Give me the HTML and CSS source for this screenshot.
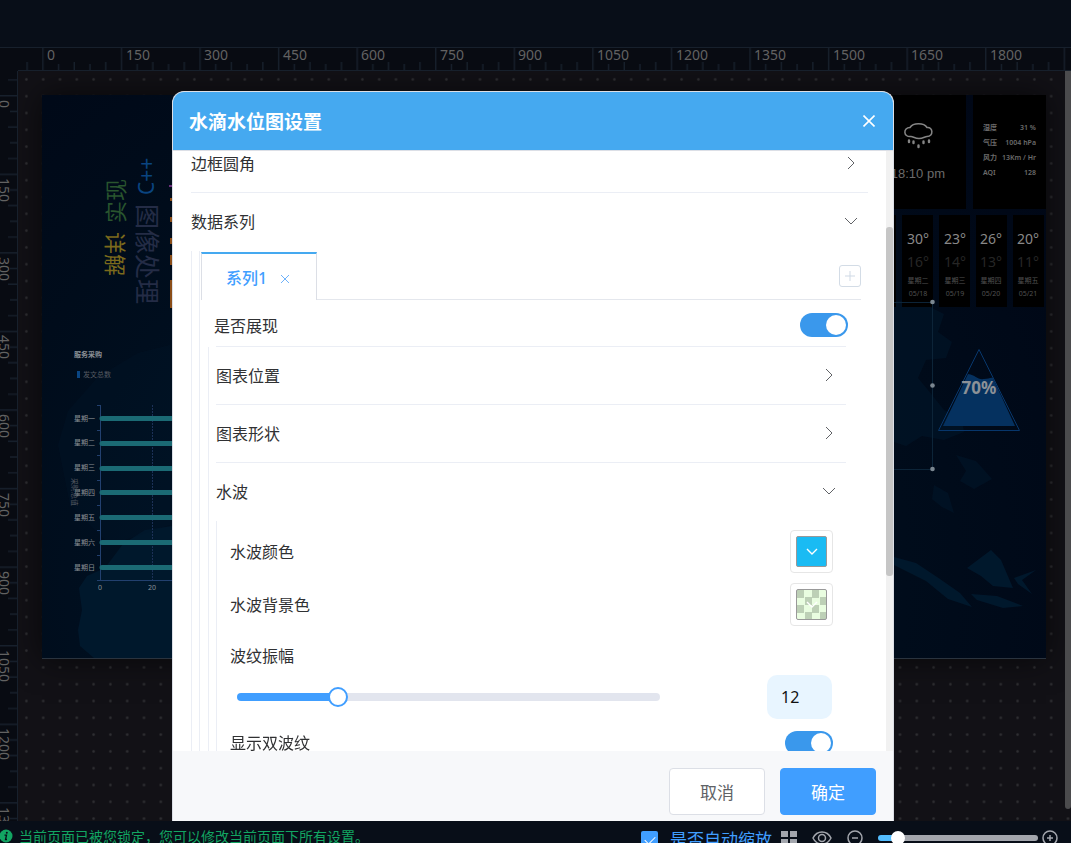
FILE: index.html
```html
<!DOCTYPE html>
<html lang="zh-CN">
<head>
  <meta charset="UTF-8">
  <title>水滴水位图设置</title>
  <link rel="stylesheet" href="styles.css">
</head>
<body>
  <div class="app">
    <header class="topbar"></header>
    <div class="ruler-corner"></div>
    <svg class="ruler ruler-x">
      <defs>
        <pattern id="ticks-x" x="24.2" y="0" width="78.57" height="24" patternUnits="userSpaceOnUse">
          <path d="M.7 0v24M16.4 16v8M32.1 14v10M47.8 16v8M63.5 14v10" stroke="#17202c" stroke-width="1.4"/>
        </pattern>
      </defs>
      <rect width="100%" height="100%" fill="url(#ticks-x)"/>
      <g>
        <text x="29" y="12">0</text>
        <text x="108" y="12">150</text>
        <text x="186" y="12">300</text>
        <text x="265" y="12">450</text>
        <text x="343" y="12">600</text>
        <text x="422" y="12">750</text>
        <text x="500" y="12">900</text>
        <text x="579" y="12">1050</text>
        <text x="658" y="12">1200</text>
        <text x="736" y="12">1350</text>
        <text x="815" y="12">1500</text>
        <text x="893" y="12">1650</text>
        <text x="972" y="12">1800</text>
      </g>
    </svg>
    <svg class="ruler ruler-y">
      <defs>
        <pattern id="ticks-y" x="0" y="24" width="18" height="78.57" patternUnits="userSpaceOnUse">
          <path d="M0 .7h18M10 16.4h8M8 32.1h10M10 47.8h8M8 63.5h10" stroke="#17202c" stroke-width="1.4"/>
        </pattern>
      </defs>
      <rect width="100%" height="100%" fill="url(#ticks-y)"/>
      <g>
        <text transform="translate(-1 29) rotate(90)">0</text>
        <text transform="translate(-1 107) rotate(90)">150</text>
        <text transform="translate(-1 186) rotate(90)">300</text>
        <text transform="translate(-1 264) rotate(90)">450</text>
        <text transform="translate(-1 343) rotate(90)">600</text>
        <text transform="translate(-1 422) rotate(90)">750</text>
        <text transform="translate(-1 500) rotate(90)">900</text>
        <text transform="translate(-1 579) rotate(90)">1050</text>
        <text transform="translate(-1 657) rotate(90)">1200</text>
        <text transform="translate(-1 736) rotate(90)">1350</text>
      </g>
    </svg>

    <main class="workspace">
      <svg class="dots">
        <defs>
          <pattern id="dots" x="0" y="0" width="16.8" height="16.8" patternUnits="userSpaceOnUse">
            <rect x="7.2" y="7.2" width="2.4" height="2.4" rx=".8" fill="#303033"/>
          </pattern>
        </defs>
        <rect width="100%" height="100%" fill="url(#dots)"/>
      </svg>
      <div class="board">
        <svg viewBox="0 0 1004 563">
          <!-- map backdrop -->
          <g fill="#00182c">
            <path d="M52 563l-14-12-2-16 4-20-3-22 8-12 18-8 18-24 22-14 27-4v132z"/>
            <path opacity=".3" d="M16 350l10-34 30-34 40-24 32-8v180l-60 20-40-40z"/>
            <path opacity=".5" d="M852 205l26 2 24 12-6 18 14 10-6 16-20 2-8 18 10 12 16 20 18 10 2 12-20 8-22-4-16 10-12-4z"/>
            <path opacity=".5" d="M914 360l20 6 16 18-18 10-14-8 6-10zM892 390l14 8 6 20-12-6-10-8z"/>
            <path d="M852 462l22 6 24 16 20 14 12 14-24-8-22-18-32-16zM925 473l24-18 10 10 12 28-20-2-12-10zM929 499l26 2 26 10-20 2-26-8zM972 483l22-8-14 10 10 14-14-10z"/>
          </g>
          <!-- word cloud -->
          <g>
            <text fill="#29552e" font-size="22" transform="translate(82 128) rotate(-90)">实现</text>
            <text fill="#7c6a1c" font-size="22" transform="translate(65 137) rotate(90)">详解</text>
            <text fill="#0a4480" font-size="21" transform="translate(112 100) rotate(-90)">C++</text>
            <text fill="#242c46" font-size="25" transform="translate(96 109) rotate(90)">图像处理</text>
            <path d="M128.500 90v2" stroke="#6a2f7a" stroke-width="3"/>
            <path d="M129 103v3M129 122v5M129 143v6M129 160v10M129 185v28" stroke="#8a4d18" stroke-width="2"/>
          </g>
          <!-- bar chart -->
          <g>
            <text class="label bold" x="32" y="262">服务采购</text>
            <rect x="35" y="276" width="3" height="7" fill="#0a4684"/>
            <text class="label dim" x="41" y="282">发文总数</text>
            <path d="M110.500 310v175" stroke="#1c3157" stroke-dasharray="2 1"/>
            <path d="M58.500 310v176M55 310.500h3M55 335.500h3M55 360.500h3M55 385.500h3M55 410.500h3M55 435.500h3M55 460.500h3M55 485.500h80" stroke="#22406f" fill="none"/>
            <path d="M60 323.500h77M60 348.500h77M60 373.500h77M60 397.500h77M60 422.500h77M60 447.500h77M60 472.500h77" stroke="#1b6a74" stroke-width="5" stroke-linecap="round"/>
            <text class="label" x="32" y="326">星期一</text>
            <text class="label" x="32" y="350">星期二</text>
            <text class="label" x="32" y="375">星期三</text>
            <text class="label" x="32" y="400">星期四</text>
            <text class="label" x="32" y="425">星期五</text>
            <text class="label" x="32" y="450">星期六</text>
            <text class="label" x="32" y="475">星期日</text>
            <text class="label" x="56" y="495">0</text>
            <text class="label" x="106" y="495">20</text>
            <text class="label dim" transform="translate(30 383) rotate(90)">采购总值</text>
          </g>
          <!-- weather -->
          <g>
            <path d="M800 0h124v114H800zM931 0h73v114h-73zM840 120h14v92h-14zM860 120h31v92h-31zM897 120h31v92h-31zM934 120h31v92h-31zM971 120h31v92h-31z" fill="#000"/>
            <path d="M868 32.500c3-5 14-5 17 0 6-1 7 9 0 9-2 0-4 2-8 2s-6-2-8-2c-8 1-8-9-1-9z" stroke="#858585" stroke-width="1.500" fill="none"/>
            <path d="M867 45.500v1.500M871.500 46.500v1.500M876.500 50.500v1.500M881.500 46.500v1.500M887 45.500v1.500" stroke="#858585" stroke-width="2.400" stroke-linecap="round"/>
            <text x="903" y="83" font-family="Liberation Sans, sans-serif" font-size="13" text-anchor="end" fill="#6b6b6b">18:10 pm</text>
            <g class="info">
              <text x="941" y="35">湿度</text><text x="994" y="35" text-anchor="end">31 %</text>
              <text x="941" y="50">气压</text><text x="994" y="50" text-anchor="end">1004 hPa</text>
              <text x="941" y="65">风力</text><text x="994" y="65" text-anchor="end">13Km / Hr</text>
              <text x="941" y="80">AQI</text><text x="994" y="80" text-anchor="end">128</text>
            </g>
            <g class="temp">
              <text x="876" y="149">30°</text><text x="913" y="149">23°</text><text x="949" y="149">26°</text><text x="986" y="149">20°</text>
            </g>
            <g class="temp low">
              <text x="876" y="172">16°</text><text x="913" y="172">14°</text><text x="949" y="172">13°</text><text x="986" y="172">11°</text>
            </g>
            <g class="day">
              <text x="876" y="188">星期二</text><text x="913" y="188">星期三</text><text x="949" y="188">星期四</text><text x="986" y="188">星期五</text>
              <text x="876" y="201">05/18</text><text x="913" y="201">05/19</text><text x="949" y="201">05/20</text><text x="986" y="201">05/21</text>
            </g>
          </g>
          <!-- selected widget frame -->
          <path d="M840 207.500h50.500v167H840" stroke="#0c2438" fill="none"/>
          <g fill="#7b8791">
            <circle cx="890.500" cy="207" r="2.300"/>
            <circle cx="890.500" cy="290.500" r="2.300"/>
            <circle cx="890.500" cy="374" r="2.300"/>
          </g>
          <!-- water level -->
          <path d="M937 254.500l40.500 81h-81z" stroke="#07366b" fill="none"/>
          <path d="M926 279c8 1 9 6 16 5 4 0 7-2 9-1l22 48H901z" fill="#05315f"/>
          <text x="937" y="299" text-anchor="middle" font-size="17" font-weight="700" fill="#8c9197">70%</text>
        </svg>
      </div>
      <div class="page-scroll"></div>
    </main>

    <footer class="statusbar">
      <div class="statusbar-inner">
        <p class="notice">
          <svg width="13" height="14" viewBox="1 0 13 14"><circle cx="7" cy="7" r="6.500" fill="#12a562"/><circle cx="7.800" cy="3.800" r="1" fill="#080e18"/><path d="M5.500 6.200h2l-1 4.300h1.500" stroke="#080e18" stroke-width="1.300" fill="none"/></svg>
          当前页面已被您锁定，您可以修改当前页面下所有设置。
        </p>
        <label class="auto-zoom"><input type="checkbox" class="check" checked>是否自动缩放</label>
        <div class="tools">
          <button class="icon-btn" aria-label="网格"><svg width="16" height="16" fill="#a3a6ad"><path d="M0 1h7v6H0zM9 1h7v6H9zM0 9h7v6H0zM9 9h7v6H9z"/></svg></button>
          <button class="icon-btn" aria-label="预览"><svg width="20" height="16" fill="none" stroke="#a3a6ad" stroke-width="1.500"><path d="M1 8c4-8 14-8 18 0-4 8-14 8-18 0z"/><circle cx="10" cy="8" r="3.500"/></svg></button>
          <button class="icon-btn" aria-label="缩小"><svg width="16" height="16" fill="none" stroke="#a3a6ad" stroke-width="1.500"><circle cx="8" cy="8" r="7"/><path d="M5 8h6"/></svg></button>
          <input type="range" class="zoom-range" min="0" max="100" value="9" aria-label="缩放">
          <button class="icon-btn" aria-label="放大"><svg width="16" height="16" fill="none" stroke="#a3a6ad" stroke-width="1.500"><circle cx="8" cy="8" r="7"/><path d="M5 8h6M8 5v6"/></svg></button>
        </div>
      </div>
    </footer>
  </div>

  <div class="overlay">
    <section class="dialog" role="dialog" aria-labelledby="dialog-title">
      <header class="dialog-header">
        <h2 id="dialog-title">水滴水位图设置</h2>
        <button class="close-btn" aria-label="关闭"><svg width="12" height="12" fill="none" stroke="#fff" stroke-width="1.600"><path d="M.5 .5l11 11M11.500 .5l-11 11"/></svg></button>
      </header>
      <div class="dialog-body">
        <div class="content">
          <button class="item">边框圆角<svg class="arrow" viewBox="0 0 14 14"><path d="M4 1l6 6-6 6"/></svg></button>
          <button class="item open">数据系列<svg class="arrow" viewBox="0 0 14 14"><path d="M1 4l6 6 6-6"/></svg></button>
          <div class="series">
            <div class="series-pane">
              <div class="tabs">
                <div class="tab">
                  <a href="#">系列1</a>
                  <button class="tab-close" aria-label="删除"><svg width="8" height="8" stroke="#6fb2fa"><path d="M0 0l8 8M8 0l-8 8"/></svg></button>
                </div>
                <div class="tabs-rest">
                  <button class="add-btn" aria-label="新增"><svg width="12" height="12" stroke="#cfd9e5"><path d="M6 1v10M1 6h10"/></svg></button>
                </div>
              </div>
              <div class="show-row">
                <label for="show">是否展现</label>
                <input type="checkbox" class="switch" id="show" checked>
              </div>
              <div class="groups">
                <button class="item">图表位置<svg class="arrow" viewBox="0 0 14 14"><path d="M4 1l6 6-6 6"/></svg></button>
                <button class="item">图表形状<svg class="arrow" viewBox="0 0 14 14"><path d="M4 1l6 6-6 6"/></svg></button>
                <button class="item open">水波<svg class="arrow" viewBox="0 0 14 14"><path d="M1 4l6 6 6-6"/></svg></button>
                <div class="wave">
                  <div class="field color-field">
                    <span>水波颜色</span>
                    <button class="picker" aria-label="水波颜色"><span class="swatch cyan"><svg width="12" height="8" fill="none" stroke="#fff" stroke-width="1.400"><path d="M1 1l5 5 5-5"/></svg></span></button>
                  </div>
                  <div class="field color-field">
                    <span>水波背景色</span>
                    <button class="picker" aria-label="水波背景色"><span class="swatch checker"><svg width="12" height="8" fill="none" stroke="#fff" stroke-width="1.400"><path d="M1 1l5 5 5-5"/></svg></span></button>
                  </div>
                  <label class="field slider-label" for="amplitude">波纹振幅</label>
                  <div class="slider-row">
                    <input type="range" class="range" id="amplitude" min="0" max="53" value="12">
                    <input type="text" class="number" value="12" aria-label="波纹振幅值">
                  </div>
                  <div class="field">
                    <label for="double">显示双波纹</label>
                    <input type="checkbox" class="switch" id="double" checked>
                  </div>
                </div>
              </div>
            </div>
          </div>
        </div>
        <div class="scroll"><div class="scroll-thumb"></div></div>
      </div>
      <footer class="dialog-footer">
        <button class="btn">取消</button>
        <button class="btn primary">确定</button>
      </footer>
    </section>
  </div>
</body>
</html>
```

FILE: styles.css
```css
* {
  box-sizing: border-box;
}
body {
  margin: 0;
  overflow: hidden;
  font-family: "Noto Sans", "Noto Sans CJK SC", sans-serif;
  font-size: 16px;
  color: #303133;
  background: #121116;
}
button {
  font: inherit;
  color: inherit;
  cursor: pointer;
}
.app {
  display: grid;
  grid-template-columns: 18px 1fr;
  grid-template-rows: 47px 24px 1fr 22px;
  height: 100vh;
}
.topbar {
  grid-column: 1 / 3;
  background: #080e18;
}
.ruler-corner {
  background: #080b12;
  border-top: 1px solid #17202c;
}
.ruler {
  width: 100%;
  height: 100%;
  background: #080b12;
  font-size: 14px;
  fill: #626262;
}
.ruler-x {
  border-top: 1px solid #17202c;
  border-bottom: 1px solid #17202c;
}
.ruler-y {
  border-right: 1px solid #17202c;
}
.workspace {
  position: relative;
  overflow: hidden;
  background: #121116;
}
.dots {
  position: absolute;
  width: 100%;
  height: 100%;
}
.board {
  position: relative;
  margin: 24px 25px 0 24px;
  border-bottom: 1px solid #2a333e;
  background: radial-gradient(circle at 40% 85%, #00172b, #000c1b 60%, #000615);
  box-shadow: 0 0 30px rgba(0, 0, 0, 0.6);
}
.board svg {
  display: block;
  width: 100%;
}
.label {
  font-size: 7px;
  fill: #8b9096;
}
.label.bold {
  font-weight: 700;
}
.label.dim {
  fill: #555a61;
}
.info {
  font-size: 7px;
  font-weight: 600;
  fill: #6b6b6b;
}
.temp {
  font-size: 14px;
  fill: #888;
  text-anchor: middle;
}
.temp.low {
  fill: #262626;
}
.day {
  font-size: 7px;
  fill: #505050;
  text-anchor: middle;
}
.page-scroll {
  position: absolute;
  top: 0;
  right: 0;
  width: 6px;
  height: calc(100% - 12px);
  background: #4b4b4d;
  border-radius: 0 0 3px 3px;
}

/* status bar */
.statusbar {
  grid-column: 1 / 3;
  background: #080e18;
}
.statusbar-inner {
  display: flex;
  align-items: center;
  height: 34px;
  padding-right: 13px;
}
.notice {
  display: flex;
  align-items: center;
  flex: 1;
  gap: 6px;
  margin: 0 0 4px;
  font-size: 14px;
  color: #12a562;
}
.auto-zoom {
  display: flex;
  align-items: center;
  gap: 12px;
  font-size: 17px;
  color: #409eff;
}
.check {
  appearance: none;
  width: 17px;
  height: 17px;
  margin: 2px 0 0;
  border-radius: 2px;
  background: #409eff;
  display: grid;
  place-items: center;
}
.check::after {
  content: "";
  width: 9px;
  height: 5px;
  border: solid #fff;
  border-width: 0 0 1px 1px;
  transform: rotate(-45deg);
}
.tools {
  display: flex;
  align-items: center;
  gap: 15px;
  margin-left: 9px;
}
.icon-btn {
  display: flex;
  padding: 0;
  border: 0;
  background: none;
}
.zoom-range {
  appearance: none;
  width: 160px;
  height: 6px;
  margin: 0 -11px 0 0;
  border-radius: 3px;
  background: linear-gradient(to right, #53bdff 12%, #a3a6ad 12%);
}
.zoom-range::-webkit-slider-thumb {
  appearance: none;
  width: 14px;
  height: 14px;
  border-radius: 50%;
  background: #fff;
}

/* dialog */
.overlay {
  position: fixed;
  inset: 91px 5px 22px 0;
  display: flex;
  justify-content: center;
}
.dialog {
  display: flex;
  flex-direction: column;
  width: 722px;
  max-width: 90%;
  border: 1px solid #dcdfe6;
  border-bottom: 0;
  border-radius: 12px 12px 0 0;
  overflow: hidden;
  background: #fff;
}
.dialog-header {
  display: flex;
  align-items: center;
  justify-content: space-between;
  height: 59px;
  padding: 0 18px 0 16px;
  border-bottom: 1px solid #dcdfe6;
  background: #45a9f0;
  color: #fff;
}
.dialog-header h2 {
  margin: 0;
  font-size: 19px;
}
.close-btn {
  display: flex;
  padding: 0;
  border: 0;
  background: none;
}
.dialog-body {
  display: flex;
  flex: 1;
  min-height: 0;
  overflow: hidden;
}
.content {
  flex: 1;
  margin: -16px 18px 0;
}
.scroll {
  width: 7px;
  padding-top: 76px;
  background: #f1f1f1;
}
.scroll-thumb {
  height: 349px;
  border-radius: 3px;
  background: #c6c6c6;
}
.item {
  display: flex;
  align-items: center;
  justify-content: space-between;
  width: 100%;
  height: 58px;
  padding: 0 10px 2px 0;
  border: 0;
  border-bottom: 1px solid #ebeef5;
  background: none;
}
.item.open {
  border-bottom: 0;
}
.arrow {
  width: 14px;
  height: 14px;
  fill: none;
  stroke: #606266;
}
.series {
  padding-left: 7px;
  border-left: 1px solid #ebeef5;
}
.series-pane {
  padding: 1px 7px 0 1px;
  border-left: 1px solid #ebeef5;
}
.tabs {
  display: flex;
  height: 48px;
}
.tab {
  display: flex;
  align-items: center;
  gap: 14px;
  padding: 0 27px 0 24px;
  border: 1px solid #dcdfe6;
  border-top: 2px solid #45a9f0;
  border-bottom: 0;
}
.tab a {
  font-weight: 500;
  color: #409eff;
  text-decoration: none;
}
.tab-close {
  display: flex;
  padding: 4px 0 0;
  border: 0;
  background: none;
}
.tabs-rest {
  display: flex;
  align-items: center;
  justify-content: flex-end;
  flex: 1;
  border-bottom: 1px solid #e4e7ed;
}
.add-btn {
  display: grid;
  place-items: center;
  width: 22px;
  height: 22px;
  padding: 0;
  border: 1px solid #d3dce6;
  border-radius: 3px;
  background: none;
}
.show-row {
  display: flex;
  align-items: center;
  justify-content: space-between;
  height: 47px;
  padding: 2px 13px 0;
}
.groups {
  margin-left: 7px;
  margin-right: 15px;
  padding-left: 7px;
  border-left: 1px solid #ebeef5;
}
.groups > .item:first-child {
  box-shadow: 0 -1px #ebeef5;
}
.wave {
  padding: 9px 0 0 13px;
  margin-right: 13px;
  border-left: 1px solid #ebeef5;
}
.field {
  display: flex;
  align-items: center;
  justify-content: space-between;
  height: 47px;
}
.field > span,
.field > label {
  padding-bottom: 2px;
}
.color-field {
  height: 43px;
  margin-bottom: 10px;
}
.slider-label {
  height: 39px;
  padding-bottom: 2px;
}
.picker {
  width: 43px;
  height: 43px;
  padding: 5px;
  border: 1px solid #e6e6e6;
  border-radius: 4px;
  background: none;
}
.swatch {
  display: grid;
  place-items: center;
  height: 31px;
  border: 1px solid #999;
  border-radius: 2px;
}
.swatch.cyan {
  background: #1abbf3;
}
.swatch.checker {
  background: conic-gradient(#e9fde0 25%, #bdd0b6 0 50%, #e9fde0 0 75%, #bdd0b6 0) 0 0 / 15px 15px;
}
.slider-row {
  display: flex;
  align-items: center;
  justify-content: space-between;
  padding: 0 1px 0 7px;
}
.range {
  appearance: none;
  flex: 1;
  height: 8px;
  margin: 0 107px 0 0;
  border-radius: 4px;
  background: linear-gradient(to right, #409eff 24%, #e2e5ee 24%);
}
.range::-webkit-slider-thumb {
  appearance: none;
  width: 20px;
  height: 20px;
  border: 2px solid #409eff;
  border-radius: 50%;
  background: #fff;
}
.number {
  width: 65px;
  height: 44px;
  padding: 0 14px;
  border: 0;
  border-radius: 10px;
  background: #e8f5ff;
  font: inherit;
  color: #111;
}
.switch {
  appearance: none;
  display: flex;
  justify-content: flex-end;
  width: 48px;
  height: 24px;
  margin: 0;
  padding: 2px;
  border-radius: 12px;
  background: #3a98ec;
}
.switch::after {
  content: "";
  width: 20px;
  height: 20px;
  border-radius: 50%;
  background: #fff;
}
.dialog-footer {
  display: flex;
  justify-content: flex-end;
  gap: 15px;
  height: 70px;
  padding: 17px 17px 6px;
  background: #f7f8fa;
}
.btn {
  width: 96px;
  height: 47px;
  border: 1px solid #dcdfe6;
  border-radius: 4px;
  background: #fff;
  font-size: 17px;
  color: #606266;
}
.btn.primary {
  border-color: #409eff;
  background: #409eff;
  color: #fff;
}
```
